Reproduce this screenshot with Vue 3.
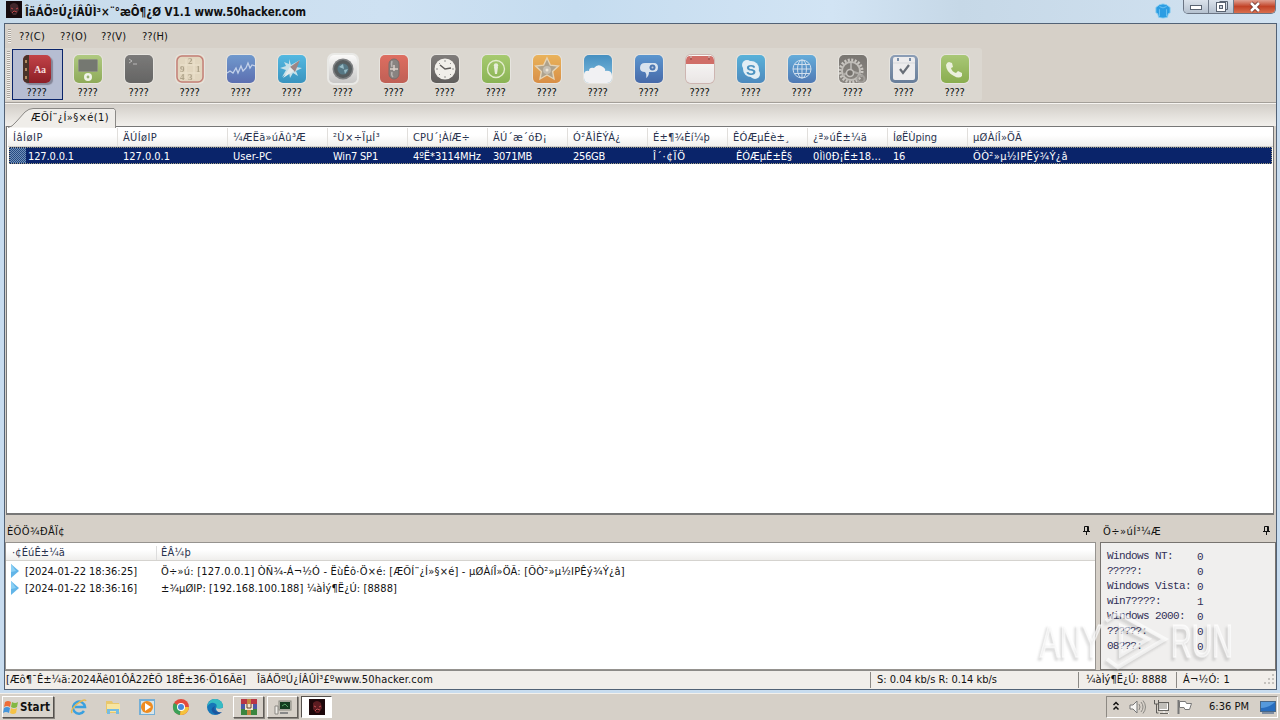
<script setup>
import { ref } from 'vue'

// spreads a label over the width that the column expects
const vFit = {
  mounted(el, { value }) {
    const w = el.getBoundingClientRect().width
    const n = el.textContent.length
    if (value && n) el.style.letterSpacing = `${(value - w) / n}px`
  }
}

const menus = [['??(C)', 26], ['??(O)', 27], ['??(V)', 25], ['??(H)', 26]]

const tools = [
  { name: 'book', art: '<path d="M0 0h6v28H0z" fill="#493229"/><path d="M2 5h2v3H2zM2 13h2v3H2zM2 21h2v3H2z" fill="#b28b61"/><text x="17" y="18" font-size="10" text-anchor="middle" font-family="Liberation Serif" font-weight="bold" fill="#f6dede">Aa</text>' },
  { name: 'pod', art: '<rect x="4.500" y="4.500" width="19" height="12" rx="1" fill="#686b65" stroke="#858b78"/><circle cx="14" cy="22" r="4" fill="#f4f7ec"/><circle cx="14" cy="22" r="1.4" fill="#92b06b"/>' },
  { name: 'term', art: '<path d="M4 4l3 2-3 2M8 9h4" fill="none" stroke="#b5b5b5"/>' },
  { name: 'calc', art: '<path d="M4 10h20M4 18h20M10 4v20M18 4v20" stroke="#eee4cd"/><rect x="1" y="1" width="26" height="26" rx="5" fill="none" stroke="#c0746e" stroke-width="1.5"/><g font-size="9" font-family="Liberation Serif" font-weight="bold" fill="#a89c80"><text x="12" y="9">2</text><text x="4" y="17">9</text><text x="20" y="17">1</text><text x="4" y="25">4</text><text x="12" y="25">3</text></g>' },
  { name: 'wave', art: '<path d="M0 18l3-2 3 2 3-5 2 5 3-7 2 5 3-3 2-5 2 5 2-3 3 1" fill="none" stroke="#c0d1ee" stroke-width="1.3"/>' },
  { name: 'compass', art: '<path d="M11 4l2 6 9-5-4 7 6 1-6 3 2 5-5-3-3 5-1-6-7 5 4-7-6-2 6-2-2-4 5 2z" fill="#c4e2ec"/><path d="M22 5l-5 12-5-5z" fill="#977b7b"/><path d="M5 23l7-11 4 4z" fill="#e8eef0"/>' },
  { name: 'camera', art: '<circle cx="14" cy="14" r="10.500" fill="#74777a"/><circle cx="14" cy="14" r="9" fill="#454d50"/><circle cx="14" cy="14" r="5.5" fill="#446c7b"/><path d="M10 12l4-3 1 5zM15 15l4-1-3 5z" fill="#8eb8c5"/>' },
  { name: 'mic', art: '<rect x="9" y="4" width="10" height="20" rx="5" fill="#7d7877" stroke="#6c5e5d"/><path d="M10 14h8M14 10v6" stroke="#ddd1ca" stroke-width="1.5"/><path d="M12 6q-1 3 0 6M12 17q-1 3 1 5" fill="none" stroke="#b5b0ae" stroke-width="1.500"/>' },
  { name: 'clock', art: '<circle cx="14" cy="14" r="10.500" fill="#f5f3ee"/><path d="M14 5v2M14 21v2M5 14h2M21 14h2M8 8l1 1M20 8l-1 1M8 20l1-1M20 20l-1-1" stroke="#888"/><path d="M9 10l5 4 6-1" fill="none" stroke="#4e4c4b" stroke-width="1.5"/>' },
  { name: 'info', art: '<circle cx="14" cy="14" r="8.5" fill="none" stroke="#e5efcd" stroke-width="1.4"/><circle cx="14" cy="10.500" r="2.200" fill="#e9f1db"/><path d="M12 12h4l-1 7h-2z" fill="#e9f1db"/>' },
  { name: 'star', art: '<path d="M14 3l3.4 7.2 8 .8-5.8 5.5L21 24l-7-4-7 4 1.4-7.5L2.6 11l8-.8z" fill="#a89b84" stroke="#e8d4b2" stroke-width="1.4"/><circle cx="14" cy="15" r="4" fill="#c2bbae"/><circle cx="14" cy="15" r="1.5" fill="#f1e8d6"/>' },
  { name: 'cloud', art: '<path d="M0 28v-9q1-4 5-3 0-4 5-3 4-5 9-1 3 2 2 4 7-1 7 5v7z" fill="#f5f5f8"/>' },
  { name: 'chat', art: '<path d="M5 13q0-5 5-5h9q4 0 4 4.500t-5 4.500h-4q0 4-3 6 1-4-1-6-5 0-5-4z" fill="#d9e5f3"/><circle cx="17.500" cy="12.500" r="3" fill="#3b6baf"/><circle cx="17.500" cy="12.500" r="1" fill="#b8c8dd"/>' },
  { name: 'cal', art: '<path d="M0 9V5q0-4 4-4h20q4 0 4 4v4z" fill="#cf605a"/><path d="M5 1v4M23 1v4" stroke="#a84843" stroke-width="2"/><path d="M5 0v3M23 0v3" stroke="#eddad8"/>' },
  { name: 'skype', art: '<circle cx="10" cy="10" r="5" fill="#e3f2fa"/><circle cx="18" cy="19" r="5" fill="#e3f2fa"/><circle cx="14" cy="14" r="8" fill="#e3f2fa"/><text x="14" y="19.500" text-anchor="middle" font-family="Liberation Sans" font-size="15" font-weight="bold" fill="#3889bd">S</text>' },
  { name: 'globe', art: '<g fill="none" stroke="#cee0f2"><circle cx="14" cy="14" r="9"/><ellipse cx="14" cy="14" rx="4.500" ry="9"/><path d="M5 14h18M14 5v18M6.500 9.500h15M6.500 18.500h15"/></g>' },
  { name: 'gear', art: '<circle cx="12" cy="16" r="11" fill="none" stroke="#c8c5c0" stroke-width="3" stroke-dasharray="2 1.450"/><circle cx="12" cy="16" r="9" fill="none" stroke="#bebbb6" stroke-width="2"/><path d="M12 8v8l-8 4M12 16l9 3" stroke="#aaa7a3" stroke-width="2" fill="none"/><circle cx="11" cy="18" r="3.500" fill="#67635f" stroke="#c3c0bc" stroke-width="1.500"/><circle cx="22" cy="24" r="3.500" fill="none" stroke="#9b9894" stroke-width="2"/>' },
  { name: 'todo', art: '<rect x="3" y="2" width="22" height="23" rx="2" fill="#f0f0f1"/><path d="M3 8h22" stroke="#d6d9de"/><path d="M8 3v3M20 3v3" stroke="#6d86a4" stroke-width="2"/><path d="M10 14l3 4 6-8" fill="none" stroke="#59606c" stroke-width="2.200"/>' },
  { name: 'phone', art: '<path d="M8 7l3 1 1 4-2 1q1 4 5 5l2-2 4 2v3q-3 3-8 0-8-4-8-11 1-3 3-3z" fill="#eef4df"/>' }
]

const columns = [
  { w: 110, t: 'ÍâÍøIP', tw: 30, v: '127.0.0.1', vw: 46 },
  { w: 110, t: 'ÄÚÍøIP', tw: 34, v: '127.0.0.1', vw: 47 },
  { w: 100, t: '¼ÆËã»úÃû³Æ', tw: 73, v: 'User-PC', vw: 39 },
  { w: 80, t: '²Ù×÷ÏµÍ³', tw: 47, v: 'Win7 SP1', vw: 45 },
  { w: 80, t: 'CPU´¦ÀíÆ÷', tw: 57, v: '4ºË*3114MHz', vw: 68 },
  { w: 80, t: 'ÄÚ´æ´óÐ¡', tw: 54, v: '3071MB', vw: 39 },
  { w: 80, t: 'Ó²ÅÌÈÝÁ¿', tw: 48, v: '256GB', vw: 32 },
  { w: 80, t: 'É±¶¾Èí¼þ', tw: 57, v: 'Î´·¢ÏÖ', vw: 33 },
  { w: 80, t: 'ÊÓÆµÉè±¸', tw: 57, v: 'ÊÓÆµÈ±Ê§', vw: 56, pad: true },
  { w: 80, t: '¿ª»úÊ±¼ä', tw: 54, v: '0Ìì0Ð¡Ê±18...', vw: 68 },
  { w: 80, t: 'ÍøËÙping', tw: 44, v: '16', vw: 12 },
  { w: 304, t: 'µØÀíÎ»ÖÃ', tw: 49, v: 'ÕÒ²»µ½IPÊý¾Ý¿â', vw: 95 }
]

const logs = [
  { time: '[2024-01-22 18:36:25]', msg: 'Ö÷»ú: [127.0.0.1] ÒÑ¾­-Á¬½Ó - ËùÊô·Ö×é: [ÆÕÍ¨¿Í»§×é] - µØÀíÎ»ÖÃ: [ÕÒ²»µ½IPÊý¾Ý¿â]', w: 464 },
  { time: '[2024-01-22 18:36:16]', msg: '±¾µØIP: [192.168.100.188] ¼àÌý¶Ë¿Ú: [8888]', w: 236 }
]

const stats = [
  ['Windows NT:', 0, 66], ['?????:', 0, 35], ['Windows Vista:', 0, 84], ['win7????:', 1, 54],
  ['Windows 2000:', 0, 78], ['??????:', 0, 40], ['08???:', 0, 35]
]

const selectedTool = ref(0)
</script>

<template>
  <div class="screen">
    <header class="titlebar">
      <svg class="app-icon" width="16" height="17" viewBox="0 0 16 17"><rect width="16" height="17" fill="#160b0e" /><path d="M4 4q4-4 8 0l1 5-3 5H7L4 10z" fill="#40272b" /><path d="M5 7l2 1M10 8l2-1M6 12l2-2 3 1" stroke="#b94347" /></svg>
      <span v-fit="281" class="title">ÎäÁÖºÚ¿ÍÂÛÌ³×¨°æÔ¶¿Ø V1.1 www.50hacker.com</span>
      <svg class="shirt" width="16" height="18" viewBox="0 0 18 18"><path d="M5 2q4-2 8 0l4 3v6l-2 1-1 4q-5 2-10 0l-1-4-2-1V5z" fill="#2c9de3" stroke="#88cef2" /><path d="M5 4q4 3 8 0M5 7v8M13 7v8" stroke="#72c5f3" fill="none" /></svg>
      <div class="captions">
        <span class="cap"><svg width="14" height="8"><rect x="1.500" y="2.500" width="11" height="4" fill="#fff" stroke="#596371" /></svg></span>
        <span class="cap"><svg width="13" height="13"><path d="M4.500 1.500h8v8h-2" fill="none" stroke="#596371" /><rect x="1.500" y="2.500" width="9" height="9" fill="#fff" stroke="#596371" /><rect x="4.500" y="5.500" width="3" height="3" fill="#ccd4de" stroke="#596371" /></svg></span>
        <span class="cap cap-close"><svg width="14" height="12"><path d="M3 2l8 8M11 2l-8 8" stroke="#6b3330" stroke-width="4" /><path d="M3 2l8 8M11 2l-8 8" stroke="#fff" stroke-width="2.500" /></svg></span>
      </div>
    </header>

    <main class="window">
      <nav class="menubar">
        <i class="grip"></i>
        <span v-for="m in menus" :key="m[0]" class="menu-item"><span v-fit="m[1]">{{ m[0] }}</span></span>
      </nav>

      <div class="toolbar">
        <div class="tool-strip">
          <i class="grip"></i>
          <button v-for="(t, i) in tools" :key="t.name" :class="['tool', { selected: i === selectedTool }]" @click="selectedTool = i">
            <svg :class="['ico', 'ico-' + t.name]" width="28" height="28" viewBox="0 0 28 28" v-html="t.art"></svg>
            <span v-fit="20">????</span>
          </button>
        </div>
      </div>

      <div class="tabs">
        <div class="tab">
          <svg class="tab-shape" width="110" height="20"><path d="M0 19.500Q4 19 8 14L17 4q4-3.500 8-3.500h81l1.500 2v17.500" fill="#efede9" stroke="#8b8986" /></svg>
          <span v-fit="78" class="tab-text">ÆÕÍ¨¿Í»§×é(1)</span>
        </div>
      </div>

      <section class="list">
        <div class="list-head">
          <div v-for="c in columns" :key="c.t" class="cell" :style="{ width: c.w + 'px' }"><span v-fit="c.tw">{{ c.t }}</span></div>
        </div>
        <div class="list-row">
          <i class="row-icon"></i>
          <div v-for="c in columns" :key="c.t" :class="['cell', { padded: c.pad }]" :style="{ width: c.w + 'px' }"><span v-fit="c.vw">{{ c.v }}</span></div>
        </div>
      </section>

      <div class="bottom">
        <section class="log-panel">
          <div class="panel-title">
            <span v-fit="58">ÈÕÖ¾ÐÅÏ¢</span>
            <svg width="8" height="10"><path d="M0 6.500h7M1.500 6V1.500h4V6M4.500 1v5M3.500 7v3" stroke="#111" fill="none" /></svg>
          </div>
          <div class="log-box">
            <div class="log-head"><div class="log-time"><span v-fit="53">·¢ÉúÊ±¼ä</span></div><span v-fit="30" class="log-event">ÊÂ¼þ</span></div>
            <div v-for="l in logs" :key="l.time" class="log-row">
              <svg width="8" height="14"><path d="M0 0l8 7-8 7z" fill="#62b5e8" /><path d="M0 0l5 7-5 1z" fill="#8bd0f5" /></svg>
              <div class="log-date"><span v-fit="112">{{ l.time }}</span></div>
              <span v-fit="l.w">{{ l.msg }}</span>
            </div>
          </div>
        </section>
        <section class="stat-panel">
          <div class="panel-title">
            <span v-fit="58">Ö÷»úÍ³¼Æ</span>
            <svg width="8" height="10"><path d="M0 6.500h7M1.500 6V1.500h4V6M4.500 1v5M3.500 7v3" stroke="#111" fill="none" /></svg>
          </div>
          <div class="stat-box">
            <div v-for="s in stats" :key="s[0]" class="stat-row"><div class="stat-name"><span v-fit="s[2]">{{ s[0] }}</span></div><span class="stat-value">{{ s[1] }}</span></div>
          </div>
        </section>
      </div>

      <footer class="status">
        <div class="st st-start"><span v-fit="240">[Æô¶¯Ê±¼ä:2024Äê01ÔÂ22ÈÕ 18Ê±36·Ö16Ãë]</span></div>
        <div class="st st-main"><span v-fit="176">ÎäÁÖºÚ¿ÍÂÛÌ³£ºwww.50hacker.com</span></div>
        <div class="st st-speed"><span v-fit="120">S: 0.04 kb/s R: 0.14 kb/s</span></div>
        <div class="st st-port"><span v-fit="81">¼àÌý¶Ë¿Ú: 8888</span></div>
        <div class="st st-conn"><span v-fit="47">Á¬½Ó: 1</span></div>
        <svg class="sizer" width="14" height="14"><path d="M10 1h2v2h-2zM6 5h2v2H6zM10 5h2v2h-2zM2 9h2v2H2zM6 9h2v2H6zM10 9h2v2h-2z" fill="#c5c2be" /></svg>
      </footer>
    </main>

    <footer class="taskbar">
      <button class="start">
        <svg width="16" height="16"><path d="M2 3q3-2 6 0L7 8Q4 6 1 8z" fill="#ef6e37" /><path d="M9 3q3 2 6 0l-1 5q-3 2-6 0z" fill="#83b842" /><path d="M1 9q3-2 6 0l-1 5q-3-2-6 0z" fill="#4595da" /><path d="M8 9q3 2 6 0l-1 5q-3 2-6 0z" fill="#f5c245" /></svg>
        <span v-fit="30">Start</span>
      </button>
      <div class="quick">
        <svg width="18" height="18"><path d="M14 13A6 6 0 1 1 15 9H5" fill="none" stroke="#3aa0df" stroke-width="2.500" /><path d="M2 15Q0 12 7 6q8-6 9-3" fill="none" stroke="#e7b94f" stroke-width="1.500" /></svg>
        <svg width="18" height="18"><path d="M2 3h6l1 2h6v10H2z" fill="#e8c76d" /><path d="M3 6h13v8H3z" fill="#f7e5a0" /><path d="M3 16v-5h12v5h-3v-3H6v3z" fill="#76bce1" /></svg>
        <svg width="18" height="18"><rect x="1" y="1" width="16" height="16" fill="#75afd6" /><rect x="3" y="3" width="13" height="13" fill="#d9e5e9" /><circle cx="9" cy="9" r="6" fill="#ef8c20" /><path d="M7 5l6 4-6 4z" fill="#fff" /></svg>
        <svg width="18" height="18"><circle cx="9" cy="9" r="8" fill="#e34b3c" /><path d="M9 9L2 5a8 8 0 0 0 6 12z" fill="#3ba158" /><path d="M9 9h8a8 8 0 0 1-9 8z" fill="#f5c33c" /><circle cx="9" cy="9" r="4" fill="#fff" /><circle cx="9" cy="9" r="3" fill="#4688da" /></svg>
        <svg width="18" height="18"><circle cx="9" cy="9" r="8" fill="#1676b8" /><path d="M1 9Q3 0 10 1q7 1 7 8-3 3-7 1 2-4-2-5-4-1-7 4z" fill="#36bcc3" /><path d="M9 8q-3 6 7 6-3 3-7 2-7-5 0-8z" fill="#1b559f" /><path d="M10 10q4 2 8-1l-2 5q-6 1-6-4z" fill="#d6d0c8" /></svg>
      </div>
      <div class="apps">
        <span class="app"><svg width="16" height="16"><path d="M0 0h16v5H0z" fill="#b93645" /><path d="M0 5h16v5H0z" fill="#4c59a7" /><path d="M0 10h16v6H0z" fill="#3b863f" /><path d="M6 0h4v16H6z" fill="#c3863e" /><path d="M4 5h8v6H4z" fill="#efe5ca" /><path d="M6 5v4h4V5" fill="none" stroke="#654034" /></svg></span>
        <span class="app"><svg width="18" height="16"><rect x="5" y="2" width="12" height="9" fill="#c5c5bd" stroke="#88877f" /><path d="M6 3h10v7H6z" fill="#133c20" /><path d="M8 7l3-2 3 3" stroke="#53a365" fill="none" /><path d="M1 7h3v8H1z" fill="#efede8" stroke="#8b8883" /><path d="M6 14h8" stroke="#888" stroke-width="2" /></svg></span>
        <span class="app pressed"><svg width="16" height="16"><rect width="16" height="16" fill="#1d080b" /><path d="M4 4q4-4 8 0l1 5-3 5H7L4 10z" fill="#5c1c21" /><path d="M5 7l2 1M10 8l2-1M6 12l2-2 3 1" stroke="#c34e50" /></svg></span>
      </div>
      <div class="tray">
        <svg width="8" height="14"><path d="M1.500 5l2.500-2.500L6.500 5M1.500 9.500L4 7l2.500 2.500" fill="none" stroke="#111" stroke-width="1.500" /></svg>
        <svg class="sound" width="18" height="16"><path d="M2 6h3l4-4v12l-4-4H2z" fill="#f6f5f3" stroke="#777" /><path d="M11 5q2 3 0 6M13 3q4 5 0 10M15 1.500q5 6.500 0 13" fill="none" stroke="#8a8884" /></svg>
        <svg class="net" width="17" height="16"><rect x="5.500" y="3.500" width="10" height="8" fill="#c0beb9" stroke="#65635f" /><path d="M6.500 10.500h8v-6M8 14.500h8M11 12v2" stroke="#fff" fill="none" /><path d="M7 14.500h8" stroke="#67645f" /><path d="M1.500 1v4h4V1M3.500 5v9h2" stroke="#5e5c59" fill="none" /></svg>
        <svg class="flag" width="17" height="16"><path d="M2.500 1v14" stroke="#777" stroke-width="2" /><path d="M3.500 2.500h6l1 2h5l-2 6H9l-1-2H3.500z" fill="#fff" stroke="#777" /></svg>
        <span v-fit="40" class="clock">6:36 PM</span>
        <svg width="16" height="14"><rect x=".5" y="1.500" width="15" height="10" fill="#286dbe" stroke="#486787" /><path d="M1 8q8 0 14-6H1z" fill="#5599dc" /><path d="M2 13h12" stroke="#274b7d" /></svg>
      </div>
    </footer>

    <svg class="watermark" width="204" height="72" viewBox="0 0 204 72">
      <g class="wm-light">
        <text x="2" y="50" textLength="62" lengthAdjust="spacingAndGlyphs">ANY</text>
        <text x="133" y="50" textLength="62" lengthAdjust="spacingAndGlyphs">RUN</text>
      </g>
      <path d="M68 14L80 6l47 26-47 28-11-8 M83 19v29l27-16z" class="wm-line" />
    </svg>
  </div>
</template>

<style>
body { overflow: hidden }
</style>

<style scoped>
.screen {
  position: relative; width: 1280px; height: 720px; overflow: hidden;
  display: flex; flex-direction: column;
  background: #c8dcef;
  font: 11px/14px "DejaVu Sans Condensed", "DejaVu Sans", sans-serif;
  color: #111; white-space: pre;
}
.screen * { box-sizing: border-box }
svg { display: block; flex: none }
button { font: inherit; color: inherit; padding: 0 }

.titlebar {
  height: 23px; flex: none; display: flex; align-items: flex-start; padding: 1px 4px 0 6px;
  background: linear-gradient(90deg, #c7dbea, #cee1f2 30%, #c5dcef 45%, #d2e4f4 65%, #c6d8e7 75%, #d2e3f2);
}
.title { margin: 4px 0 0 3px; font-size: 11.5px; font-weight: bold }
.shirt { margin: 1px 12px 0 auto }
.captions {
  display: flex; height: 14px; margin-top: -1px; border: 1px solid #6b7584; border-top: 0;
  border-radius: 0 0 5px 5px; overflow: hidden;
}
.cap { display: flex; align-items: center; justify-content: center; width: 25px; background: linear-gradient(#dbe3ec, #b5c1cf); border-right: 1px solid #707b8a }
.cap-close { width: 41px; border: 0; background: linear-gradient(#e0a091, #c24327 50%, #d96f4e) }

.window {
  flex: none; width: 1273px; height: 667px; margin-left: 4px;
  border: 1px solid #526276; background: #d6d0c8; display: flex; flex-direction: column;
}
.grip { flex: none; width: 3px; background: repeating-linear-gradient(#aaa59e 0 1px, #f2efea 1px 2px) }
.menubar { height: 24px; flex: none; display: flex; align-items: center; padding-left: 3px }
.menubar .grip { height: 14px; margin-right: 8px }
.menu-item { width: 41px; padding-top: 2px }
.toolbar { height: 55px; flex: none; border-bottom: 1px solid #a39f99; background: #d6d0c8 }
.tool-strip { display: flex; align-items: center; width: 977px; height: 53px; padding-left: 2px; background: #dbd7d0; border-radius: 0 3px 3px 0 }
.tool-strip .grip { height: 48px; margin-right: 2px }
.tool {
  width: 51px; height: 51px; border: 1px solid transparent; background: none;
  display: flex; flex-direction: column; align-items: center; padding: 5px 2px 0 0;
}
.tool.selected { background: #b6bdd2; border-color: #0a246a }
.tool span { margin-top: 3px; line-height: 13px }
.tool:not(.selected) .ico { opacity: .88 }
.ico { border-radius: 5px; overflow: hidden; box-shadow: 0 0 0 1px #f2f0ed99 }
.ico-book { background: linear-gradient(#c24348, #8d1e26); box-shadow: 2px 2px 1px #858697 }
.ico-pod { background: linear-gradient(#aac877, #84a548) }
.ico-term { background: linear-gradient(#6e6e6e, #555) }
.ico-calc { background: #e4d6bd }
.ico-wave { background: linear-gradient(#6291cd, #4b61ad) }
.ico-compass { background: linear-gradient(#42b5e4, #238bbd) }
.ico-camera { background: linear-gradient(#fff, #c5c5c5); box-shadow: 0 0 0 2px #ececea }
.ico-mic { background: linear-gradient(#df6052, #bc5045) }
.ico-clock { background: linear-gradient(#747170, #4f4d4c) }
.ico-info { background: linear-gradient(#a0c963, #7faf44) }
.ico-star { background: linear-gradient(#ecae4b, #d88534) }
.ico-cloud { background: linear-gradient(#3286bf, #75bce3) }
.ico-chat { background: linear-gradient(#4a8dcf, #335ba4) }
.ico-cal { background: linear-gradient(#fff, #ece8e8); box-shadow: 0 0 0 1px #ccb1ad }
.ico-skype { background: linear-gradient(#47addb, #397fbb) }
.ico-globe { background: linear-gradient(#55a7dc, #3d6db1) }
.ico-gear { background: linear-gradient(#6c6965, #817d78) }
.ico-todo { background: linear-gradient(#8196b3, #597292) }
.ico-phone { background: linear-gradient(#a2c56b, #7fa83d) }

.tabs { height: 23px; flex: none; padding: 4px 0 0 3px; border-top: 1px solid #f6f4f1; background: linear-gradient(#d2cec8, #f2f0ec) }
.tab { position: relative; width: 110px; height: 20px; padding: 3px 0 0 23px }
.tab-shape { position: absolute; left: 0; top: 0 }
.tab-text { position: relative }

.list { height: 389px; flex: none; margin: 0 2px 0 1px; border: 2px solid #777; border-width: 1px 1px 2px; background: #fff }
.list-head { display: flex; height: 19px; margin: 1px 0 0 1px; background: linear-gradient(#fff 40%, #f0efed); border-bottom: 1px solid #d1cfcb; color: #28324d }
.cell { flex: none; padding: 3px 0 0 5px; overflow: hidden; border-right: 1px solid #e1dfdc }
.cell:last-child { flex: 1; border: 0 }
.list-row { position: relative; display: flex; height: 17px; margin: 0 1px 0 2px; background: #0a246a; border: 1px dotted #9b9a7e; color: #fff }
.list-row .cell { border: 0; padding: 2px 0 0 5px; line-height: 13px }
.list-row .cell:nth-child(2) { margin-left: -2px; padding-left: 20px }
.list-row .padded { padding-left: 8px }
.row-icon { position: absolute; left: 0; top: 0; width: 16px; height: 15px; background: repeating-conic-gradient(#7190b8 0 25%, #264b82 0 50%) 0 0 / 2px 2px }

.bottom { height: 155px; flex: none; display: flex; gap: 4px }
.log-panel { width: 1091px }
.stat-panel { width: 176px }
.panel-title { height: 27px; display: flex; align-items: center; justify-content: space-between; padding: 7px 5px 0 2px }
.stat-panel .panel-title { padding-left: 3px }
.panel-title svg { margin-bottom: 5px }
.log-box { height: 128px; background: #fff; border: 1px solid #96938f }
.log-head { display: flex; height: 18px; margin-bottom: 2px; padding-top: 3px; background: linear-gradient(#fff 40%, #efeeec); border-bottom: 1px solid #d5d3cf; color: #28324d }
.log-time { width: 151px; padding-left: 6px; border-right: 1px solid #ddd }
.log-event { margin-left: 4px }
.log-row { display: flex; height: 17px; align-items: center; padding: 1px 0 0 5px }
.log-row svg { margin-bottom: 2px }
.log-date { width: 142px; padding-left: 6px }
.stat-box { height: 128px; padding: 6px 0 0 6px; background: #f0efee; border: 1px solid #77736f; color: #303057; font-family: "Liberation Mono", monospace; font-size: 11px }
.stat-row { display: flex; height: 15px }
.stat-name { width: 90px }
.stat-value { padding-top: 1px }

.status { flex: 1; display: flex; align-items: center; background: #f1eeea; border-top: 1px solid #8c8a87 }
.st { height: 16px; padding-top: 1px }
.st-start { width: 252px; padding-left: 1px }
.st-main { flex: 1 }
.st-speed { width: 208px; padding-left: 6px; border-left: 1px solid #8c8985 }
.st-port { width: 98px; padding-left: 7px; border-left: 1px solid #8c8985 }
.st-conn { width: 83px; padding-left: 6px; border-left: 1px solid #8c8985 }
.sizer { margin-left: 3px }

.taskbar { height: 27px; flex: none; margin-top: 3px; padding: 1px 2px 2px; display: flex; align-items: center; background: #d6d0c8; border-top: 1px solid #f3f0eb }
.start { display: flex; align-items: center; gap: 1px; width: 52px; height: 22px; background: #d9d4cc; border: 1px solid; border-color: #fff #55514d #55514d #fff; box-shadow: 1px 1px 0 #88847e; font-size: 11.5px; font-weight: bold }
.quick { display: flex; gap: 16px; margin-left: 16px }
.apps { display: flex; gap: 3px; margin-left: 9px }
.app { width: 31px; height: 22px; display: flex; align-items: center; justify-content: center; border: 1px solid; border-color: #fff #605c57 #605c57 #fff; box-shadow: 1px 1px 0 #8c8882 }
.pressed { background: #fff; border-color: #55514d #fff #fff #55514d; box-shadow: none }
.tray { height: 22px; margin-left: auto; width: 172px; display: flex; align-items: center; padding-left: 5px; border: 1px solid; border-color: #8d8983 #fff #fff #8d8983 }
.sound { margin-left: 8px }
.net { margin-left: 7px }
.flag { margin-left: 6px }
.clock { margin: 1px 11px 0 16px }

.watermark { position: absolute; left: 1038px; top: 607px; pointer-events: none; filter: drop-shadow(-2px 3px 1px #6665) }
.wm-light { fill: #ffffff90; font: 46px "Liberation Sans", sans-serif; stroke: #ffffff90; stroke-width: 1.5 }
.wm-line { fill: none; stroke: #ffffff98; stroke-width: 4 }
</style>
